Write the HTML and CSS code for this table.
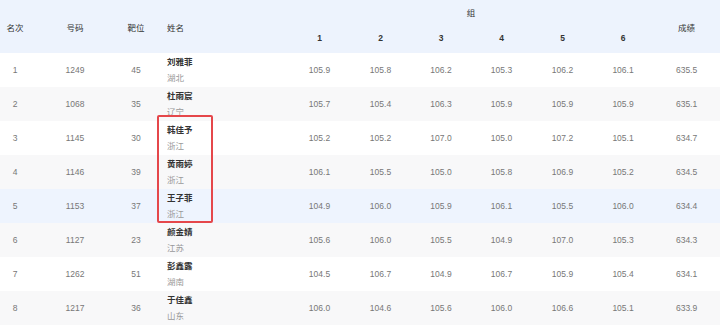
FILE: index.html
```html
<!DOCTYPE html>
<html lang="zh">
<head>
<meta charset="utf-8">
<link rel="stylesheet" href="styles.css">
</head>
<body>
<div class="wrap">
<table class="score">
<colgroup>
<col class="w-rank"><col class="w-no"><col class="w-lane"><col class="w-name">
<col class="w-g"><col class="w-g"><col class="w-g2"><col class="w-g"><col class="w-g"><col class="w-g2">
<col class="w-total">
</colgroup>
<thead>
<tr class="h1">
<th rowspan="2">名次</th><th rowspan="2">号码</th><th rowspan="2">靶位</th><th rowspan="2" class="name">姓名</th>
<th colspan="6">组</th><th rowspan="2">成绩</th>
</tr>
<tr class="h2">
<th class="num">1</th><th class="num">2</th><th class="num">3</th><th class="num">4</th><th class="num">5</th><th class="num">6</th>
</tr>
</thead>
<tbody>
<tr><td>1</td><td>1249</td><td>45</td><td class="name"><b>刘雅菲</b><span>湖北</span></td><td>105.9</td><td>105.8</td><td>106.2</td><td>105.3</td><td>106.2</td><td>106.1</td><td>635.5</td></tr>
<tr class="alt"><td>2</td><td>1068</td><td>35</td><td class="name"><b>杜雨宸</b><span>辽宁</span></td><td>105.7</td><td>105.4</td><td>106.3</td><td>105.9</td><td>105.9</td><td>105.9</td><td>635.1</td></tr>
<tr><td>3</td><td>1145</td><td>30</td><td class="name"><b>韩佳予</b><span>浙江</span></td><td>105.2</td><td>105.2</td><td>107.0</td><td>105.0</td><td>107.2</td><td>105.1</td><td>634.7</td></tr>
<tr class="alt"><td>4</td><td>1146</td><td>39</td><td class="name"><b>黄雨婷</b><span>浙江</span></td><td>106.1</td><td>105.5</td><td>105.0</td><td>105.8</td><td>106.9</td><td>105.2</td><td>634.5</td></tr>
<tr class="hover"><td>5</td><td>1153</td><td>37</td><td class="name"><b>王子菲</b><span>浙江</span></td><td>104.9</td><td>106.0</td><td>105.9</td><td>106.1</td><td>105.5</td><td>106.0</td><td>634.4</td></tr>
<tr class="alt"><td>6</td><td>1127</td><td>23</td><td class="name"><b>颜金婧</b><span>江苏</span></td><td>105.6</td><td>106.0</td><td>105.5</td><td>104.9</td><td>107.0</td><td>105.3</td><td>634.3</td></tr>
<tr><td>7</td><td>1262</td><td>51</td><td class="name"><b>彭鑫露</b><span>湖南</span></td><td>104.5</td><td>106.7</td><td>104.9</td><td>106.7</td><td>105.9</td><td>105.4</td><td>634.1</td></tr>
<tr class="alt"><td>8</td><td>1217</td><td>36</td><td class="name"><b>于佳鑫</b><span>山东</span></td><td>106.0</td><td>104.6</td><td>105.6</td><td>106.0</td><td>106.6</td><td>105.1</td><td>633.9</td></tr>
</tbody>
</table>
<div class="mark"></div>
</div>
</body>
</html>
```
FILE: styles.css
```css
html, body {
  margin: 0;
  padding: 0;
  background: #ffffff;
}
body {
  font-family: "Liberation Sans", "Noto Sans CJK SC", sans-serif;
  font-size: 8.5px;
  color: #666;
}
.wrap {
  position: relative;
  width: 720px;
}
.score {
  width: 720px;
  table-layout: fixed;
  border-collapse: collapse;
  border-spacing: 0;
}
.w-rank { width: 30px; }
.w-no { width: 90px; }
.w-lane { width: 32px; }
.w-name { width: 137px; }
.w-g { width: 61px; }
.w-g2 { width: 60px; }
.w-total { width: 67px; }

thead tr {
  background: #edf3fd;
}
th {
  font-weight: normal;
  color: #333;
  text-align: center;
  padding: 0;
  font-size: 8.5px;
}
th.num {
  font-weight: bold;
  color: #333;
}
.h1 { height: 24px; }
.h1 th { padding-top: 0; }
.h2 { height: 29px; }
.h2 th { padding-bottom: 2px; }

td {
  height: 34px;
  padding: 0;
  text-align: center;
  vertical-align: middle;
  color: #777;
  font-size: 8.5px;
}
th.name, td.name {
  text-align: left;
  padding-left: 15px;
}
td.name b {
  display: block;
  font-weight: bold;
  color: #333;
  line-height: 16px;
}
td.name span {
  display: block;
  color: #999;
  line-height: 16px;
}
tr.alt { background: #f8f8f9; }
tr.hover { background: #eef4fe; }

.mark {
  position: absolute;
  left: 157px;
  top: 115px;
  width: 52px;
  height: 104px;
  border: 2px solid #e5474b;
  border-radius: 2px;
}
```
